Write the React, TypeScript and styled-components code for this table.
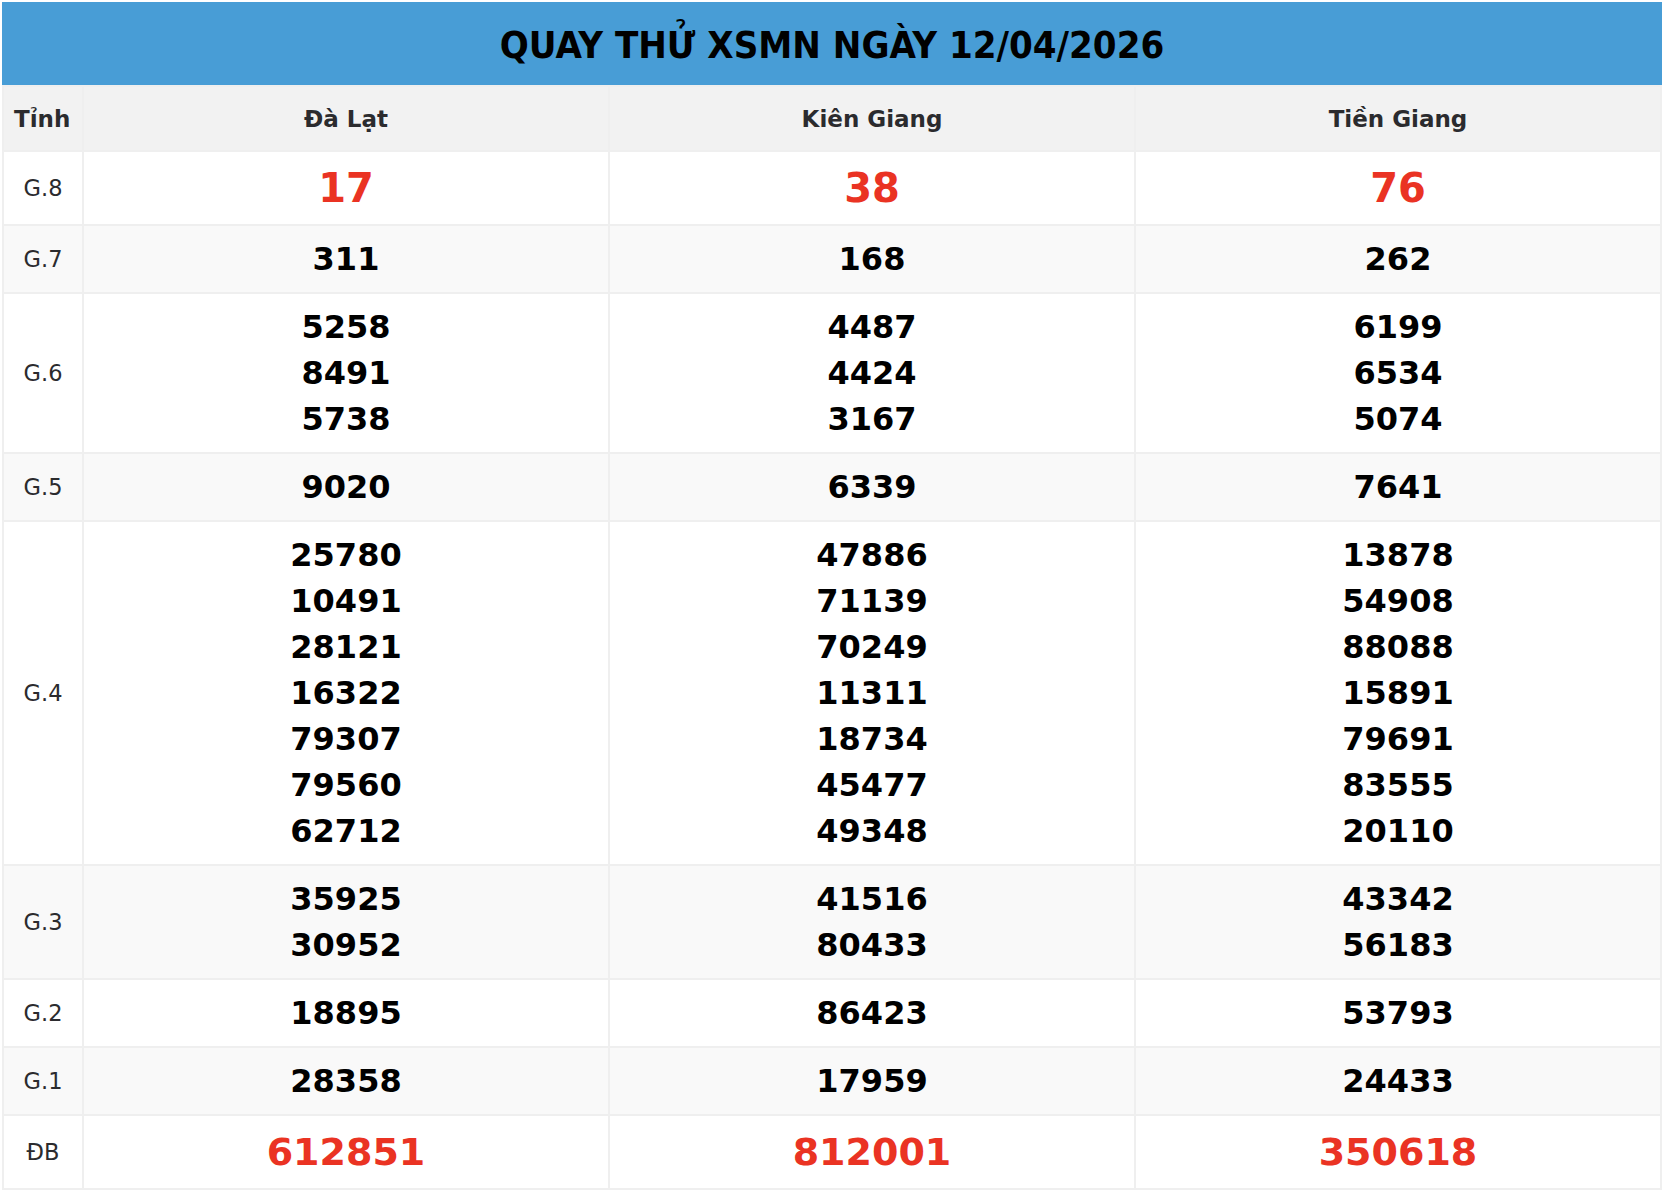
import React from "react";
import styled, { createGlobalStyle } from "styled-components";

const GlobalStyle = createGlobalStyle`
  body {
    margin: 0;
    background: #fff;
    font-family: "DejaVu Sans", Verdana, sans-serif;
  }
`;

const Wrapper = styled.div`
  padding: 2px;
  width: 1660px;
`;

const Title = styled.div`
  height: 83px;
  padding-top: 2px;
  box-sizing: border-box;
  background: #489dd6;
  display: flex;
  align-items: center;
  justify-content: center;
  font-family: "DejaVu Sans Condensed", "DejaVu Sans", sans-serif;
  font-weight: bold;
  font-size: 38px;
  color: #000;
`;

const Table = styled.table`
  width: 100%;
  border-collapse: collapse;
  table-layout: fixed;
`;

const HeadCell = styled.th<{ $left?: boolean }>`
  height: 63px;
  padding: 0 10px;
  background: #f2f2f2;
  border: 2px solid #efefef;
  color: #2b2b2e;
  font-size: 23px;
  font-weight: bold;
  text-align: ${(p) => (p.$left ? "left" : "center")};
`;

const Row = styled.tr<{ $alt?: boolean }>`
  background: ${(p) => (p.$alt ? "#f9f9f9" : "#fff")};
`;

const Label = styled.td`
  border: 2px solid #efefef;
  padding: 10px 0;
  text-align: center;
  color: #2b2b2e;
  font-size: 22.5px;
`;

const Cell = styled.td<{ $size?: number }>`
  border: 2px solid #efefef;
  padding: 10px 0;
  text-align: center;
  vertical-align: middle;
  font-weight: bold;
  font-size: ${(p) => (p.$size ? `${p.$size}px` : "32px")};
  line-height: ${(p) => (p.$size ? "52px" : "46px")};
  color: ${(p) => (p.$size ? "#ea3323" : "#000")};
`;

const Num = styled.div``;

type Prize = { label: string; size?: number; values: string[][] };

const prizes: Prize[] = [
  { label: "G.8", size: 40, values: [["17"], ["38"], ["76"]] },
  { label: "G.7", values: [["311"], ["168"], ["262"]] },
  {
    label: "G.6",
    values: [
      ["5258", "8491", "5738"],
      ["4487", "4424", "3167"],
      ["6199", "6534", "5074"],
    ],
  },
  { label: "G.5", values: [["9020"], ["6339"], ["7641"]] },
  {
    label: "G.4",
    values: [
      ["25780", "10491", "28121", "16322", "79307", "79560", "62712"],
      ["47886", "71139", "70249", "11311", "18734", "45477", "49348"],
      ["13878", "54908", "88088", "15891", "79691", "83555", "20110"],
    ],
  },
  {
    label: "G.3",
    values: [
      ["35925", "30952"],
      ["41516", "80433"],
      ["43342", "56183"],
    ],
  },
  { label: "G.2", values: [["18895"], ["86423"], ["53793"]] },
  { label: "G.1", values: [["28358"], ["17959"], ["24433"]] },
  { label: "ĐB", size: 38, values: [["612851"], ["812001"], ["350618"]] },
];

const provinces = ["Đà Lạt", "Kiên Giang", "Tiền Giang"];

const App: React.FC = () => {
  return (
    <Wrapper>
      <GlobalStyle />
      <Title>QUAY THỬ XSMN NGÀY 12/04/2026</Title>
      <Table>
        <colgroup>
          <col style={{ width: 80 }} />
          <col />
          <col />
          <col />
        </colgroup>
        <thead>
          <tr>
            <HeadCell $left>Tỉnh</HeadCell>
            {provinces.map((p) => (
              <HeadCell key={p}>{p}</HeadCell>
            ))}
          </tr>
        </thead>
        <tbody>
          {prizes.map((prize, i) => (
            <Row key={prize.label} $alt={i % 2 === 1}>
              <Label>{prize.label}</Label>
              {prize.values.map((col, j) => (
                <Cell key={j} $size={prize.size}>
                  {col.map((v) => (
                    <Num key={v}>{v}</Num>
                  ))}
                </Cell>
              ))}
            </Row>
          ))}
        </tbody>
      </Table>
    </Wrapper>
  );
};

export default App;
